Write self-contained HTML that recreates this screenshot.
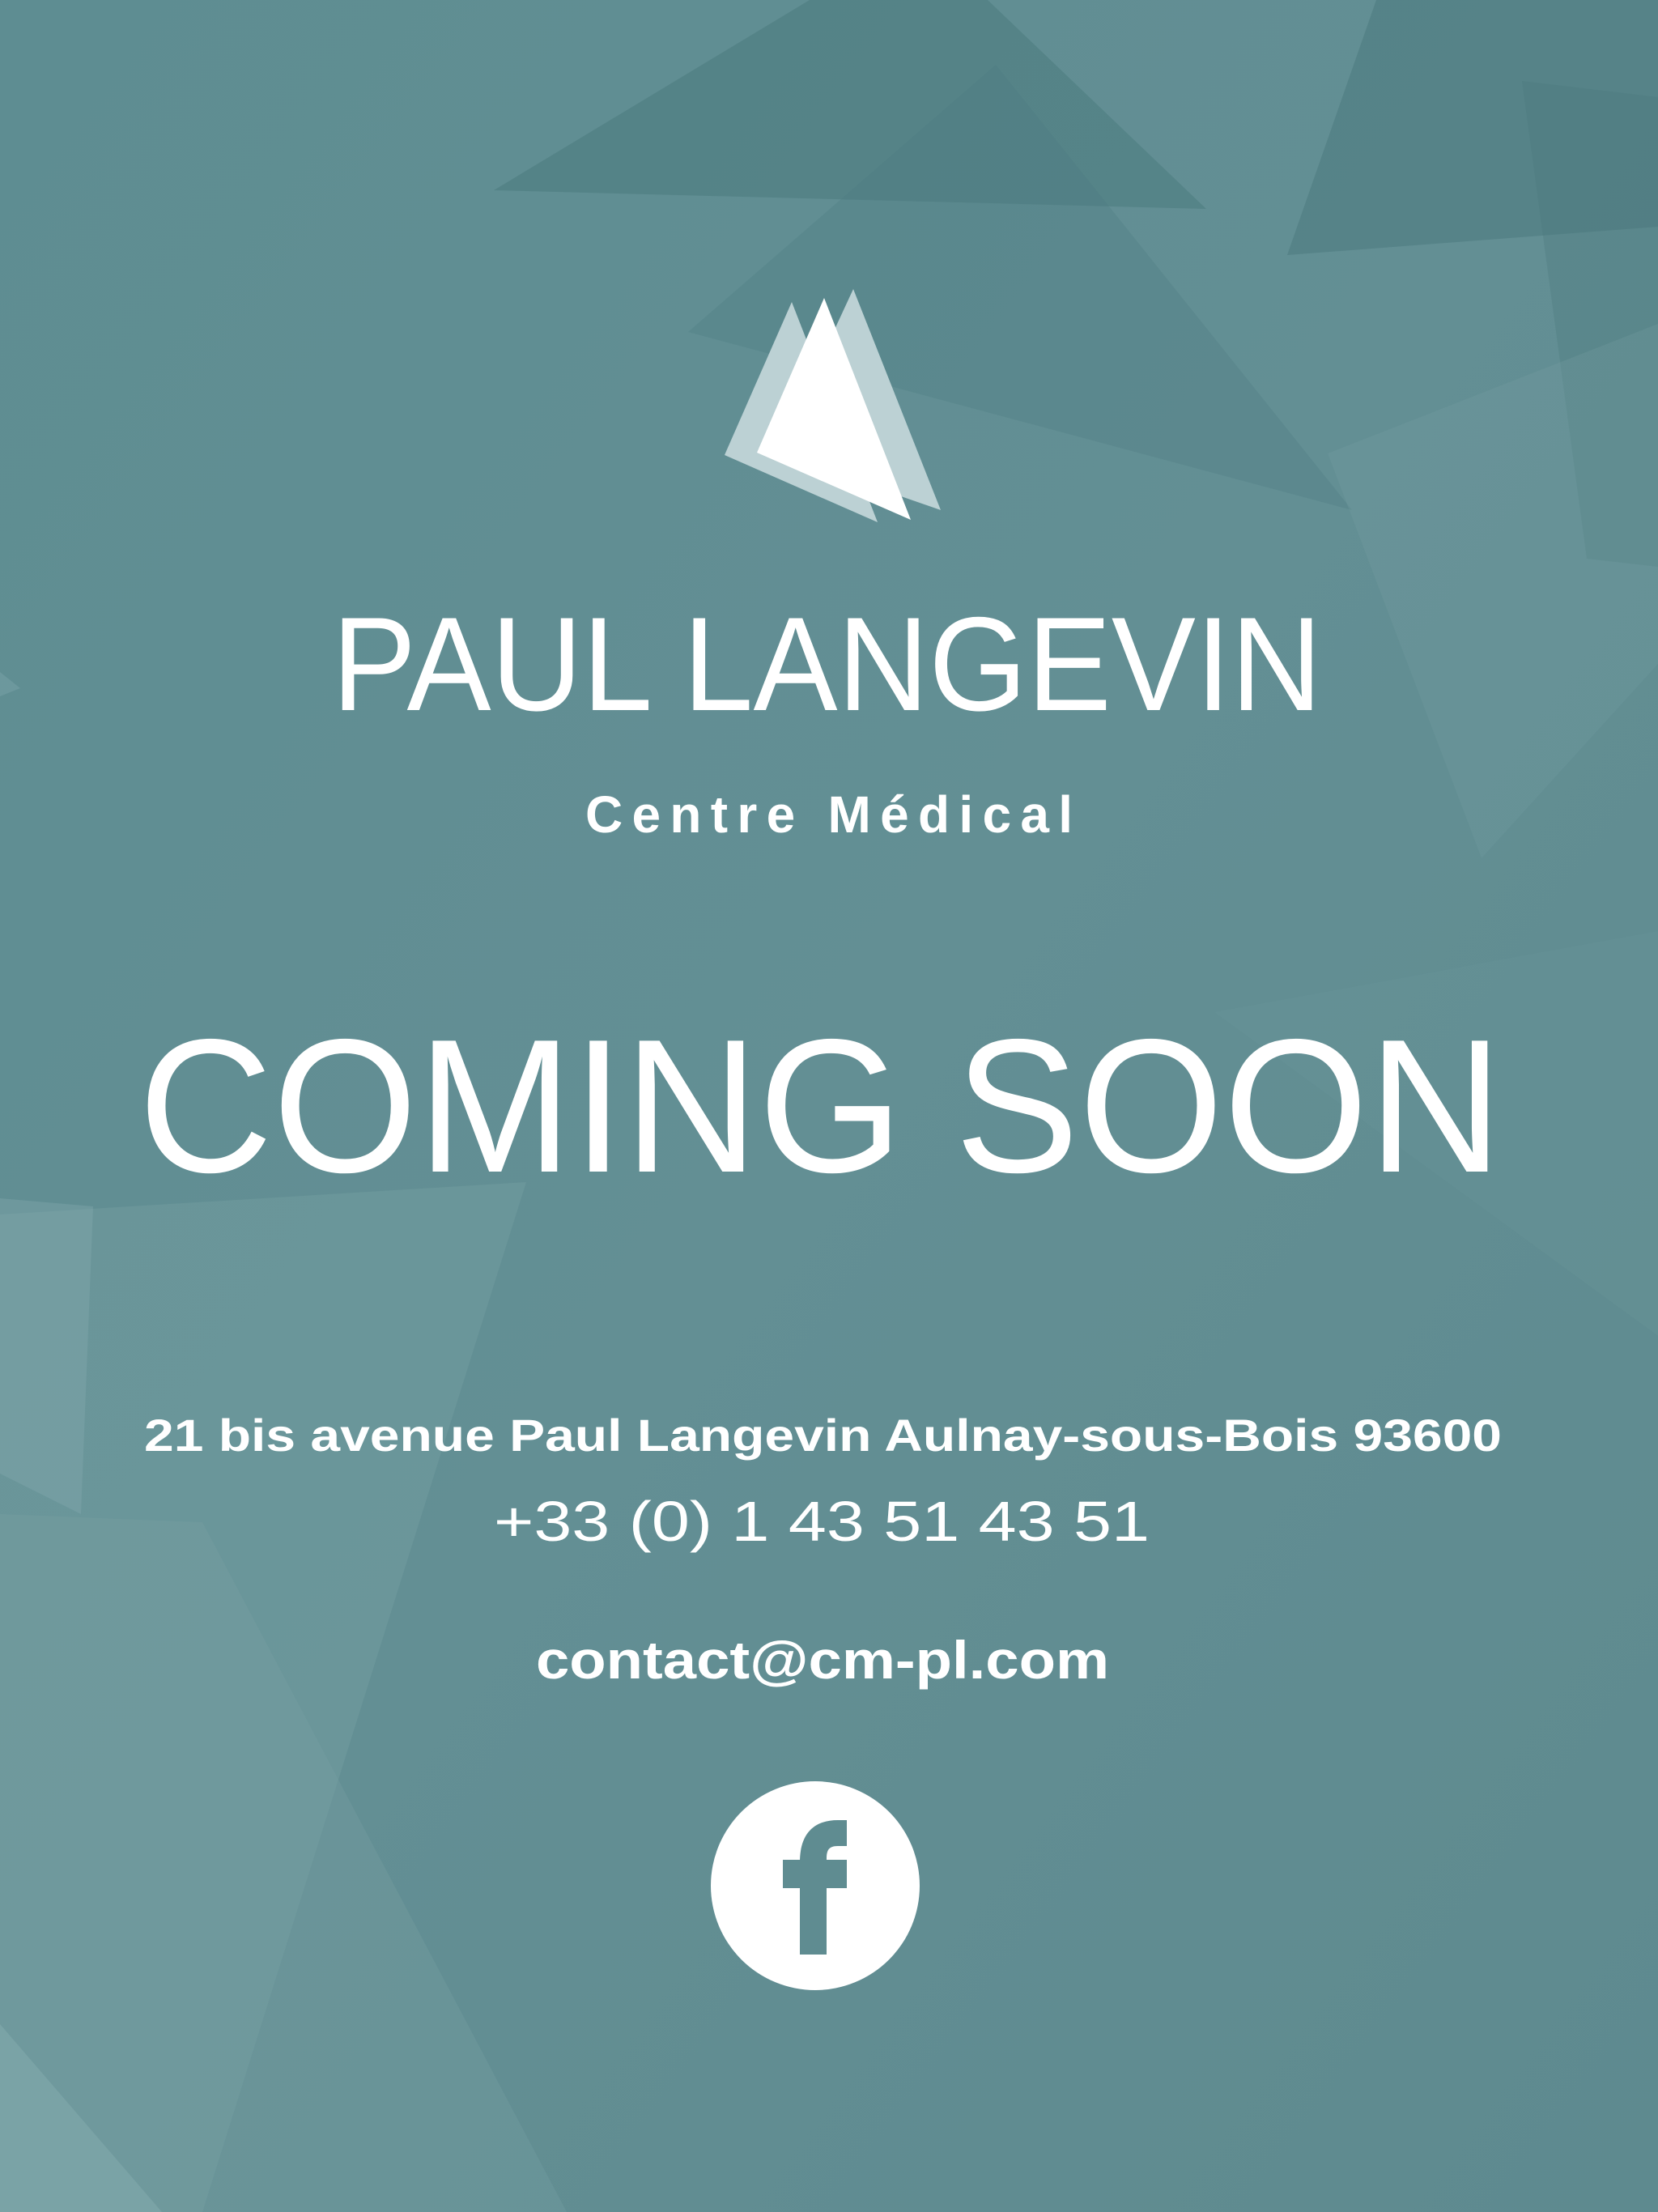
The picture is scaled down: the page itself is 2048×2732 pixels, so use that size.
<!DOCTYPE html>
<html><head><meta charset="utf-8"><style>
html,body{margin:0;padding:0;width:2048px;height:2732px;overflow:hidden;background:#5f8c91}
svg{display:block}
text{font-family:"Liberation Sans",sans-serif;fill:#fff}
</style></head><body>
<svg width="2048" height="2732" viewBox="0 0 2048 2732" xmlns="http://www.w3.org/2000/svg">
<defs>
<linearGradient id="bg" x1="0" y1="0" x2="1" y2="1">
<stop offset="0" stop-color="#5e8d92"/><stop offset="0.5" stop-color="#638f94"/><stop offset="1" stop-color="#5e8a8f"/>
</linearGradient>
</defs>
<rect width="2048" height="2732" fill="url(#bg)"/>
<g>
<polygon points="610,235 1000,0 1220,0 1490,258" fill="#3f6f74" opacity="0.35"/>
<polygon points="850,410 1230,80 1670,630" fill="#4c7a80" opacity="0.3"/>
<polygon points="1590,315 1700,0 2048,0 2048,280" fill="#3e6c72" opacity="0.35"/>
<polygon points="1880,100 1960,690 2048,700 2048,120" fill="#4a777c" opacity="0.3"/>
<polygon points="1640,560 2048,400 2048,820 1830,1060" fill="#78a0a5" opacity="0.25"/>
<polygon points="0,1500 650,1460 250,2732 0,2732" fill="#7aa2a7" opacity="0.35"/>
<polygon points="0,1480 115,1490 100,1870 0,1820" fill="#86adb2" opacity="0.35"/>
<polygon points="0,1870 250,1880 700,2732 0,2732" fill="#7aa1a6" opacity="0.3"/>
<polygon points="0,2500 200,2732 0,2732" fill="#8db1b5" opacity="0.4"/>
<polygon points="0,830 25,850 0,860" fill="#7aa2a7" opacity="0.5"/>
<polygon points="1500,1250 2048,1150 2048,1650" fill="#6c979c" opacity="0.25"/>
</g>
<polygon points="978,373 895,562 1084,645" fill="#bcd1d4"/>
<polygon points="1054,357 1162,630 960,560" fill="#bcd1d4"/>
<polygon points="1018,368 935,559 1125,642" fill="#ffffff"/>
<text x="410" y="877" font-size="165" textLength="1223" lengthAdjust="spacingAndGlyphs">PAUL LANGEVIN</text>
<text x="723" y="1028" font-size="64" font-weight="bold" textLength="602" lengthAdjust="spacing">Centre Médical</text>
<text x="171" y="1447" font-size="235" textLength="1685" lengthAdjust="spacingAndGlyphs">COMING SOON</text>
<text x="178" y="1792" font-size="56" font-weight="bold" textLength="1677" lengthAdjust="spacingAndGlyphs">21 bis avenue Paul Langevin Aulnay-sous-Bois 93600</text>
<text x="610" y="1903" font-size="70" textLength="810" lengthAdjust="spacingAndGlyphs">+33 (0) 1 43 51 43 51</text>
<text x="662" y="2073" font-size="66" font-weight="bold" textLength="708" lengthAdjust="spacingAndGlyphs">contact@cm-pl.com</text>
<circle cx="1007" cy="2329" r="129" fill="#fff"/>
<path d="M988 2414 V2300 C988 2265 1005 2248 1035 2248 H1046 V2280 H1035 C1024 2280 1021 2285 1021 2295 V2414 Z" fill="#5f8c91"/>
<rect x="967" y="2297" width="79" height="35" fill="#5f8c91"/>
</svg>
</body></html>
